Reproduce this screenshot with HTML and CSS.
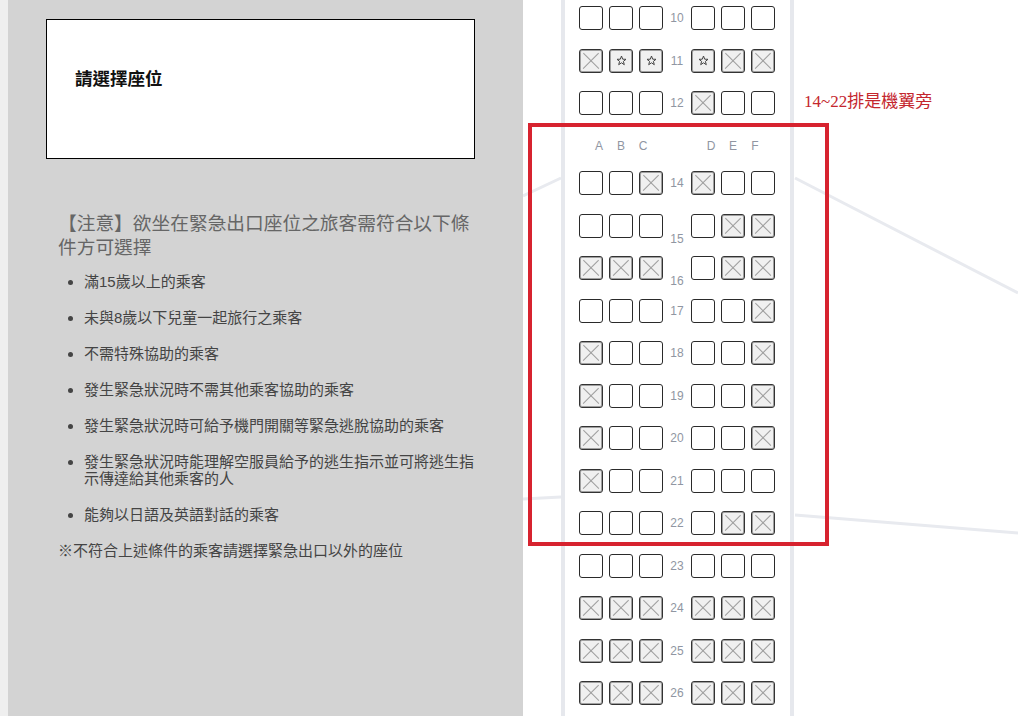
FILE: index.html
```html
<!DOCTYPE html>
<html lang="zh-Hant">
<head>
    <meta charset="UTF-8">
    <meta name="viewport" content="width=device-width, initial-scale=1.0">
    <title>選擇座位</title>
    <link rel="stylesheet" href="styles.css">
</head>
<body>
    <div class="layout">
        <!-- 左側說明 -->
        <div class="sidebar">
            <div class="pick-box">請選擇座位</div>

            <div class="notice">
                <h3>【注意】欲坐在緊急出口座位之旅客需符合以下條件方可選擇</h3>
                <ul>
                    <li>滿15歲以上的乘客</li>
                    <li>未與8歲以下兒童一起旅行之乘客</li>
                    <li>不需特殊協助的乘客</li>
                    <li>發生緊急狀況時不需其他乘客協助的乘客</li>
                    <li>發生緊急狀況時可給予機門開關等緊急逃脫協助的乘客</li>
                    <li>發生緊急狀況時能理解空服員給予的逃生指示並可將逃生指示傳達給其他乘客的人</li>
                    <li>能夠以日語及英語對話的乘客</li>
                </ul>
                <p class="footnote">※不符合上述條件的乘客請選擇緊急出口以外的座位</p>
            </div>
        </div>

        <!-- 右側座位圖 -->
        <div class="cabin">
            <svg class="wings" width="495" height="716" viewBox="0 0 495 716">
                <line x1="0" y1="196" x2="38" y2="178" />
                <line x1="0" y1="499" x2="38" y2="497" />
                <line x1="272" y1="178" x2="495" y2="293" />
                <line x1="272" y1="515" x2="495" y2="533" />
            </svg>

            <div class="seat-map" id="seatMap"></div>

            <div class="wing-frame"></div>
            <div class="wing-note">14~22排是機翼旁</div>
        </div>
    </div>

    <script>
        // o = 空位, x = 已選, s = 推薦座位
        const rows = [
            ['10', 'ooo', 'ooo'],
            ['11', 'xss', 'sxx'],
            ['12', 'ooo', 'xoo'],
            ['letters'],
            ['14', 'oox', 'xoo'],
            ['15', 'ooo', 'oxx', 'low'],
            ['16', 'xxx', 'oxx', 'low'],
            ['17', 'ooo', 'oox'],
            ['18', 'xoo', 'oox'],
            ['19', 'xoo', 'oox'],
            ['20', 'xoo', 'oox'],
            ['21', 'xoo', 'ooo'],
            ['22', 'ooo', 'oxx'],
            ['23', 'ooo', 'ooo'],
            ['24', 'xxx', 'xxx'],
            ['25', 'xxx', 'xxx'],
            ['26', 'xxx', 'xxx']
        ];

        const star = '<svg width="11" height="11" viewBox="0 0 11 11"><polygon points="5.5,1 6.7,4.2 10,4.3 7.4,6.4 8.3,9.7 5.5,7.8 2.7,9.7 3.6,6.4 1,4.3 4.3,4.2" /></svg>';

        function seatGroup(codes) {
            let html = '<div class="group">';
            for (const c of codes) {
                if (c === 'x') html += '<span class="seat taken"></span>';
                else if (c === 's') html += '<span class="seat starred">' + star + '</span>';
                else html += '<span class="seat"></span>';
            }
            return html + '</div>';
        }

        function letterGroup(letters) {
            let html = '<div class="group">';
            for (const l of letters) html += '<span class="letter">' + l + '</span>';
            return html + '</div>';
        }

        let out = '';
        for (const r of rows) {
            if (r[0] === 'letters') {
                out += '<div class="row letters">' + letterGroup('ABC') + '<span class="num"></span>' + letterGroup('DEF') + '</div>';
                continue;
            }
            out += '<div class="row ' + (r[3] || '') + '">' + seatGroup(r[1]) + '<span class="num">' + r[0] + '</span>' + seatGroup(r[2]) + '</div>';
        }
        document.getElementById('seatMap').innerHTML = out;
    </script>
</body>
</html>
```

FILE: styles.css
```css
html, body {
    margin: 0;
    padding: 0;
    height: 100%;
    overflow: hidden;
}
body {
    font-family: "Liberation Sans", "Noto Sans CJK TC", sans-serif;
    background: #fff;
    color: #444;
}
.layout {
    display: flex;
    height: 100%;
}
.sidebar {
    width: 523px;
    flex-shrink: 0;
    border-left: 8px solid #efefef;
    background-color: #d3d3d3;
    padding: 19px 48px 0 38px;
    box-sizing: border-box;
}
.pick-box {
    height: 140px;
    box-sizing: border-box;
    border: 1px solid #000;
    background: #fff;
    padding: 48px 28px 0;
    font-size: 17.5px;
    line-height: 22px;
    color: #111;
    font-weight: bold;
}
.notice {
    padding-left: 12px;
}
.notice h3 {
    margin: 53px 0 0;
    font-size: 18.72px;
    line-height: 24px;
    font-weight: normal;
    color: #666;
}
.notice ul {
    margin: 12.5px 0 0;
    padding-left: 26px;
}
.notice li {
    font-size: 15px;
    line-height: 17px;
    margin-bottom: 19px;
}
.footnote {
    margin: 0;
    font-size: 15px;
    line-height: 17px;
}

/* 座位圖 */
.cabin {
    position: relative;
    flex: 1;
    height: 100%;
    overflow: hidden;
}
.wings {
    position: absolute;
    left: 0;
    top: 0;
}
.wings line {
    stroke: #e8eaef;
    stroke-width: 3;
}
.seat-map {
    position: relative;
    margin-left: 38px;
    width: 233px;
    min-height: 100%;
    box-sizing: border-box;
    padding: 6px 15px 0 14px;
    border-left: 4px solid #e6e8ed;
    border-right: 4px solid #e6e8ed;
    background: #fff;
}
.row {
    display: flex;
    align-items: center;
    height: 24px;
    margin-bottom: 18.5px;
}
.group {
    display: flex;
    gap: 6px;
}
.num {
    width: 28px;
    text-align: center;
    font-size: 12px;
    line-height: 14px;
    color: #9096a2;
}
.row.low .num {
    align-self: flex-end;
    margin-bottom: -8px;
}
.row.letters {
    height: 19px;
    align-items: flex-end;
}
.row.letters .group {
    width: 84px;
    justify-content: center;
    gap: 0;
}
.letter {
    width: 22px;
    text-align: center;
    font-size: 12px;
    line-height: 14px;
    color: #9096a2;
}
.seat {
    position: relative;
    width: 24px;
    height: 24px;
    box-sizing: border-box;
    border: 1px solid #2a2a2a;
    border-radius: 3px;
    background: #fff;
    display: flex;
    align-items: center;
    justify-content: center;
}
.seat.taken,
.seat.starred {
    border-color: #333;
    background: #f0f0f0;
    box-shadow: inset 0 0 0 1px #a0a0a0;
}
.seat.taken::before,
.seat.taken::after {
    content: "";
    position: absolute;
    left: 50%;
    top: 50%;
    width: 22px;
    height: 1.4px;
    background: #9e9e9e;
    transform: translate(-50%, -50%) rotate(45deg);
}
.seat.taken::after {
    transform: translate(-50%, -50%) rotate(-45deg);
}
.seat.starred svg polygon {
    fill: none;
    stroke: #444;
    stroke-width: 1;
}

/* 機翼標示 */
.wing-frame {
    position: absolute;
    left: 5px;
    top: 123px;
    width: 301px;
    height: 423px;
    box-sizing: border-box;
    border: 4px solid #d7232f;
}
.wing-note {
    position: absolute;
    left: 281px;
    top: 91px;
    font-family: "Liberation Serif", "Noto Sans CJK TC", serif;
    font-size: 17px;
    line-height: 22px;
    color: #c4262e;
    white-space: nowrap;
}
```
